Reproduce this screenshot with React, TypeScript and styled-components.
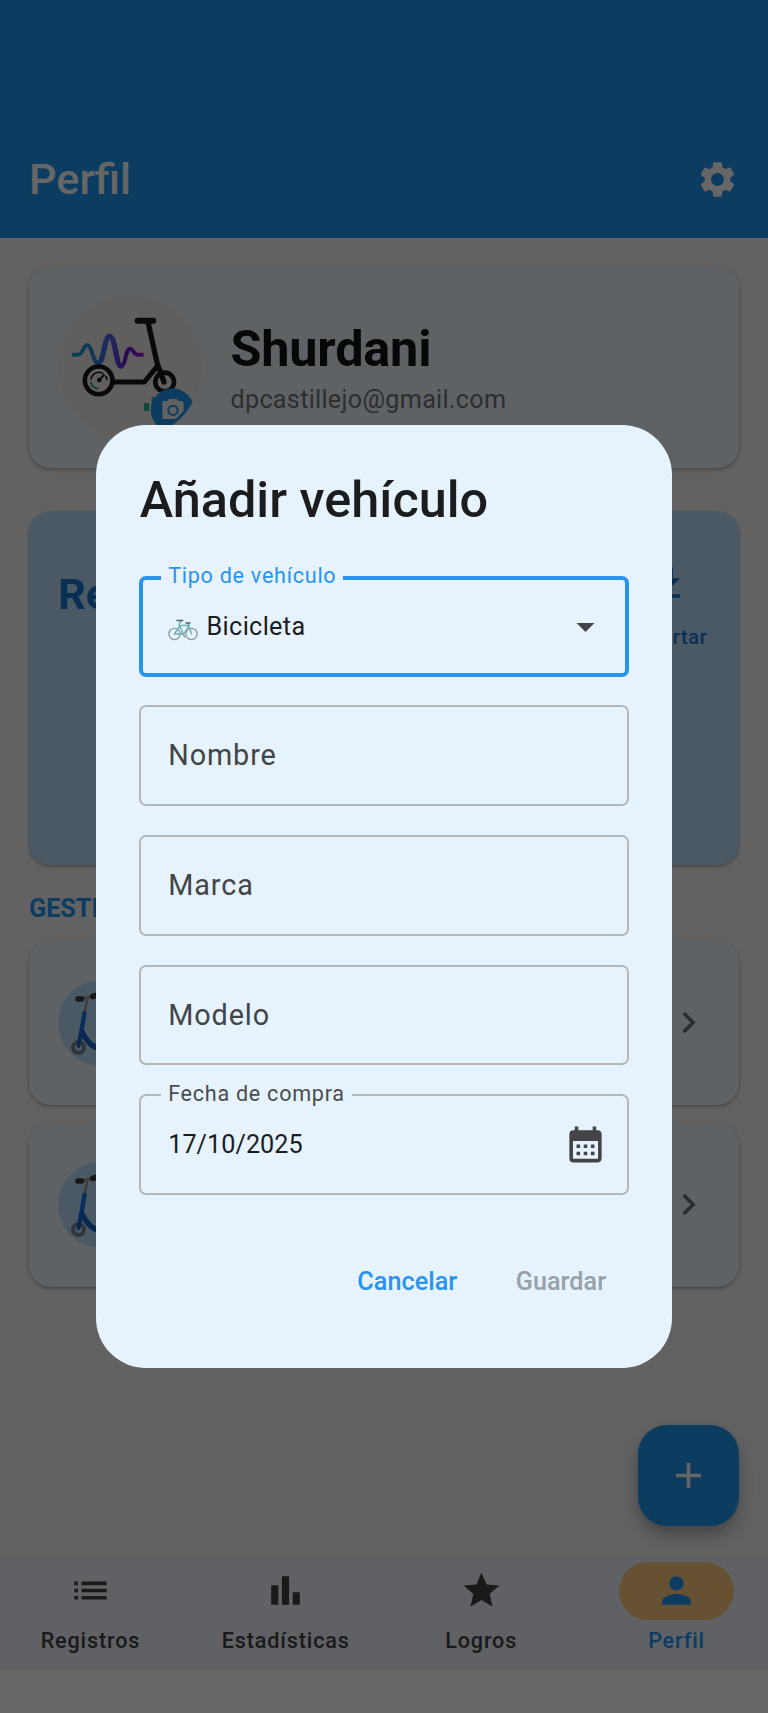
import React from "react";
import styled, { createGlobalStyle } from "styled-components";
import {
  MdSettings,
  MdList,
  MdBarChart,
  MdStar,
  MdPerson,
  MdArrowDropDown,
  MdCalendarMonth,
  MdChevronRight,
  MdDownload,
  MdAdd,
} from "react-icons/md";

const GlobalStyle = createGlobalStyle`
  *, *::before, *::after { box-sizing: border-box; }
  body { margin: 0; background: #fff; font-family: Roboto, "Liberation Sans", sans-serif; }
  svg { display: block; flex: none; }
`;

const Screen = styled.div`
  position: relative;
  display: flex;
  flex-direction: column;
  width: 768px;
  height: 1713px;
  overflow: hidden;
  background: #fff;
`;

const TopBar = styled.header`
  display: flex;
  align-items: center;
  justify-content: space-between;
  height: 237.6px;
  padding: 122.4px 29px 0;
  background: #2196f3;
  color: #fff;
`;

const TopTitle = styled.h1`
  margin: 0;
  font-size: 43.2px;
  line-height: 64px;
  font-weight: 500;
`;

const Content = styled.main`
  position: relative;
  display: flex;
  flex-direction: column;
  height: 1317.4px;
  padding: 28.4px 29px 0;
  background: #f5f5f5;
`;

const Card = styled.section<{ $tone?: string }>`
  display: flex;
  flex: none;
  border-radius: 22px;
  background: ${(p) => p.$tone ?? "#edf5fb"};
  box-shadow: 0 2px 4px rgba(0, 0, 0, 0.26), 0 1px 2px rgba(0, 0, 0, 0.06);
`;

const ProfileCard = styled(Card)`
  align-items: center;
  gap: 28.5px;
  height: 202px;
  padding: 0 29px;
`;

const Avatar = styled.div`
  width: 144px;
  height: 144px;
  border-radius: 50%;
  overflow: hidden;
  background: #f3eeeb;
`;

const UserName = styled.div`
  color: #111416;
  font-size: 50.4px;
  line-height: 65px;
  font-weight: 700;
  letter-spacing: -0.2px;
`;

const UserMail = styled.div`
  padding-top: 1px;
  color: #6e7378;
  font-size: 25.2px;
  line-height: 36px;
  letter-spacing: 0.28px;
`;

const SummaryCard = styled(Card)`
  justify-content: space-between;
  height: 354px;
  margin-top: 43px;
  padding: 51px 29px 0;
`;

const SummaryTitle = styled.h2`
  margin: 0;
  color: #1976d2;
  font-size: 43.2px;
  line-height: 66px;
  font-weight: 700;
`;

const ExportButton = styled.div`
  display: flex;
  flex-direction: column;
  align-items: center;
  gap: 18px;
  width: 86px;
  color: #1976d2;
  font-size: 19.8px;
  line-height: 29px;
  font-weight: 500;
  letter-spacing: 0.7px;
`;

const SectionTitle = styled.h3`
  margin: 26px 0 14px;
  color: #2196f3;
  font-size: 25.2px;
  line-height: 36px;
  font-weight: 700;
`;

const VehicleList = styled.div`
  display: flex;
  flex-direction: column;
  gap: 17.6px;
`;

const VehicleCard = styled(Card)`
  align-items: center;
  justify-content: space-between;
  height: 164px;
  padding: 0 29px;
  color: #6c7075;
`;

const VehiclePhoto = styled.div`
  width: 86px;
  height: 86px;
  border-radius: 50%;
  overflow: hidden;
  background: #bbdefb;
`;

const Fab = styled.div`
  position: absolute;
  right: 29px;
  bottom: 29px;
  display: flex;
  align-items: center;
  justify-content: center;
  width: 101px;
  height: 101px;
  border-radius: 29px;
  background: #2196f3;
  color: #fff;
  box-shadow: 0 10px 18px rgba(0, 0, 0, 0.26), 0 3px 6px rgba(0, 0, 0, 0.08);
`;

const NavBar = styled.nav`
  display: flex;
  gap: 14.4px;
  height: 114px;
  padding: 7px 1px 0 0;
  background: #edf2fc;
`;

const NavItem = styled.div<{ $active?: boolean }>`
  display: flex;
  flex: 1 1 0;
  flex-direction: column;
  align-items: center;
  gap: 6.4px;
  color: ${(p) => (p.$active ? "#2196f3" : "#424242")};
  font-size: 21.6px;
  line-height: 29px;
  font-weight: 500;
  letter-spacing: 0.85px;
`;

const NavPill = styled.div<{ $active?: boolean }>`
  display: flex;
  align-items: center;
  justify-content: center;
  width: 115px;
  height: 57.6px;
  border-radius: 29px;
  background: ${(p) => (p.$active ? "#ffcc80" : "transparent")};
`;

const Scrim = styled.div`
  position: absolute;
  inset: 0;
  display: flex;
  flex-direction: column;
  align-items: center;
  padding-top: 424.5px;
  background: rgba(0, 0, 0, 0.6);
`;

const Dialog = styled.div`
  display: flex;
  flex-direction: column;
  width: 576px;
  height: 943px;
  padding: 42.4px 43.2px 0;
  border-radius: 50px;
  background: #e6f3fd;
`;

const DialogTitle = styled.h2`
  margin: 0 0 44px 0.6px;
  color: #1b1c1e;
  font-size: 50.4px;
  line-height: 65px;
  font-weight: 500;
`;

const Fields = styled.div`
  display: flex;
  flex-direction: column;
  gap: 28.8px;
`;

const Field = styled.div<{ $focused?: boolean }>`
  position: relative;
  display: flex;
  align-items: center;
  justify-content: space-between;
  height: 100.8px;
  padding: 0 ${(p) => (p.$focused ? 18 : 20)}px 0 ${(p) => (p.$focused ? 25 : 27)}px;
  border: ${(p) => (p.$focused ? "4px solid #2894ee" : "2px solid #b5b8bb")};
  border-radius: 7px;
  color: #424447;
`;

const FloatingLabel = styled.span<{ $focused?: boolean }>`
  position: absolute;
  top: ${(p) => (p.$focused ? -19 : -17)}px;
  left: ${(p) => (p.$focused ? 18 : 20)}px;
  padding: 0 7px;
  background: #e6f3fd;
  color: ${(p) => (p.$focused ? "#2894ee" : "#4a4c50")};
  font-size: 21.6px;
  line-height: 29px;
  letter-spacing: 0.72px;
  white-space: nowrap;
`;

const Placeholder = styled.span`
  font-size: 28.8px;
  line-height: 43px;
  letter-spacing: 0.9px;
`;

const Value = styled.span<{ $spacing?: number }>`
  display: flex;
  align-items: center;
  gap: 8.4px;
  color: #1b1c1e;
  font-size: 25.2px;
  line-height: 36px;
  letter-spacing: ${(p) => p.$spacing ?? 0.35}px;
`;

const SelectValue = styled(Value)`
  padding-top: 2px;
`;

const VehicleIcon = styled.span`
  padding-top: 6px;
`;

const Actions = styled.div`
  display: flex;
  justify-content: flex-end;
  gap: 58.5px;
  margin-top: 69px;
  padding-right: 22.7px;
`;

const Action = styled.span<{ $disabled?: boolean }>`
  color: ${(p) => (p.$disabled ? "#98a1a8" : "#2894ee")};
  font-size: 25.2px;
  line-height: 36px;
  font-weight: 500;
  letter-spacing: 0.04px;
`;

const Logo = () => (
  <svg width="144" height="144" viewBox="24 15 432 432" fill="none" strokeLinecap="round">
    <defs>
      <linearGradient id="wave" gradientUnits="userSpaceOnUse" x1="66" y1="0" x2="281" y2="0">
        <stop offset="0" stopColor="#1aa9c4" />
        <stop offset="0.25" stopColor="#238fdb" />
        <stop offset="0.55" stopColor="#5063e8" />
        <stop offset="0.75" stopColor="#6a18d8" />
        <stop offset="1" stopColor="#9a20d0" />
      </linearGradient>
    </defs>
    <path
      d="M66 194H84C100 194 98 166 112 166S128 219 144 219C162 219 162 139 179 139S198 228 213 228S226 176 240 176C252 176 248 194 264 194H281"
      stroke="url(#wave)"
      strokeWidth="12"
      strokeLinecap="butt"
    />
    <path d="M144 219C162 219 162 139 179 139S198 228 213 228" stroke="url(#wave)" strokeWidth="16" />
    <g stroke="#1c1814">
      <path d="M263 92H310" strokeWidth="18" />
      <path d="M294 96L322 222L342 276" strokeWidth="16" />
      <path d="M194 276H283L324 226" strokeWidth="15" strokeLinejoin="round" />
      <circle cx="146" cy="271" r="41.500" strokeWidth="14" />
      <circle cx="344" cy="276" r="28" strokeWidth="14" />
      <path d="M123 268A24 24 0 0 1 160 251M167 258A24 24 0 0 1 171 270" strokeWidth="5" strokeLinecap="butt" />
      <path d="M147 270L162 255" strokeWidth="6" />
    </g>
    <circle cx="148" cy="270" r="7" fill="#1c1814" />
    <path d="M122 276A25 25 0 0 0 145 296" stroke="#2ba87d" strokeWidth="6" strokeLinecap="butt" />
    <path d="M282 339H298V363H282ZM305 322H320V363H305Z" fill="#27b386" />
    <circle cx="367" cy="360" r="65" fill="#2196f3" />
    <path d="M342 333H352L357 327H380L385 333H394Q401 333 401 340V362L378 387H337V340Q337 333 342 333Z" fill="#f5f5f5" />
    <circle cx="369" cy="361" r="14" stroke="#2196f3" strokeWidth="6" />
  </svg>
);

const Scooter = () => (
  <svg width="86" height="86" viewBox="0 0 86 86" fill="none" strokeLinecap="round">
    <path d="M21 19L38 15.500" stroke="#a89488" strokeWidth="2.600" />
    <path d="M20 19H23.500M34.500 16.500L43 14" stroke="#3c3a3a" strokeWidth="5.500" />
    <path d="M29.500 18L26.500 32" stroke="#a89488" strokeWidth="2.600" />
    <circle cx="20.500" cy="67.500" r="5.500" stroke="#78868a" strokeWidth="4" />
    <circle cx="66" cy="67.500" r="5.500" stroke="#78868a" strokeWidth="4" />
    <path d="M26.500 33L23 54" stroke="#1976e0" strokeWidth="4.500" />
    <path d="M24 52Q32 68 42 68H64" stroke="#1464cc" strokeWidth="5.500" />
    <path d="M23 53L20.500 66" stroke="#1464cc" strokeWidth="4" />
  </svg>
);

const Bicycle = () => (
  <svg width="30" height="22" viewBox="0 0 30 22" fill="none" strokeLinecap="round">
    <g stroke="#8d979d" strokeWidth="1.300">
      <circle cx="6.500" cy="15" r="5.600" />
      <circle cx="23.500" cy="15" r="5.600" />
      <path d="M14 14L17 18M12 2L15 1.500" />
    </g>
    <path d="M6.500 15L12 6.500H21L15.500 15.500L11 5L12.500 3M20 4L23.500 15M6.500 15H15.500" stroke="#6dafb2" strokeWidth="1.400" />
    <path d="M9 1.500H14M18 4H22" stroke="#59666c" strokeWidth="1.500" />
  </svg>
);

const navItems = [
  { label: "Registros", icon: MdList },
  { label: "Estadísticas", icon: MdBarChart },
  { label: "Logros", icon: MdStar },
  { label: "Perfil", icon: MdPerson, active: true },
];

export default function App() {
  return (
    <Screen>
      <GlobalStyle />
      <TopBar>
        <TopTitle>Perfil</TopTitle>
        <MdSettings size={43} />
      </TopBar>
      <Content>
        <ProfileCard>
          <Avatar>
            <Logo />
          </Avatar>
          <div>
            <UserName>Shurdani</UserName>
            <UserMail>dpcastillejo@gmail.com</UserMail>
          </div>
        </ProfileCard>
        <SummaryCard $tone="#bbdefb">
          <SummaryTitle>Reto</SummaryTitle>
          <ExportButton>
            <MdDownload size={43} />
            Exportar
          </ExportButton>
        </SummaryCard>
        <SectionTitle>GESTIÓN</SectionTitle>
        <VehicleList>
          {[0, 1].map((id) => (
            <VehicleCard key={id}>
              <VehiclePhoto>
                <Scooter />
              </VehiclePhoto>
              <MdChevronRight size={43} />
            </VehicleCard>
          ))}
        </VehicleList>
        <Fab>
          <MdAdd size={43} />
        </Fab>
      </Content>
      <NavBar>
        {navItems.map(({ label, icon: Icon, active }) => (
          <NavItem key={label} $active={active}>
            <NavPill $active={active}>
              <Icon size={43} />
            </NavPill>
            {label}
          </NavItem>
        ))}
      </NavBar>
      <Scrim>
        <Dialog>
          <DialogTitle>Añadir vehículo</DialogTitle>
          <Fields>
            <Field $focused>
              <FloatingLabel $focused>Tipo de vehículo</FloatingLabel>
              <SelectValue>
                <VehicleIcon>
                  <Bicycle />
                </VehicleIcon>
                Bicicleta
              </SelectValue>
              <MdArrowDropDown size={43} />
            </Field>
            <Field>
              <Placeholder>Nombre</Placeholder>
            </Field>
            <Field>
              <Placeholder>Marca</Placeholder>
            </Field>
            <Field>
              <Placeholder>Modelo</Placeholder>
            </Field>
            <Field>
              <FloatingLabel>Fecha de compra</FloatingLabel>
              <Value $spacing={0.05}>17/10/2025</Value>
              <MdCalendarMonth size={43} />
            </Field>
          </Fields>
          <Actions>
            <Action>Cancelar</Action>
            <Action $disabled>Guardar</Action>
          </Actions>
        </Dialog>
      </Scrim>
    </Screen>
  );
}
